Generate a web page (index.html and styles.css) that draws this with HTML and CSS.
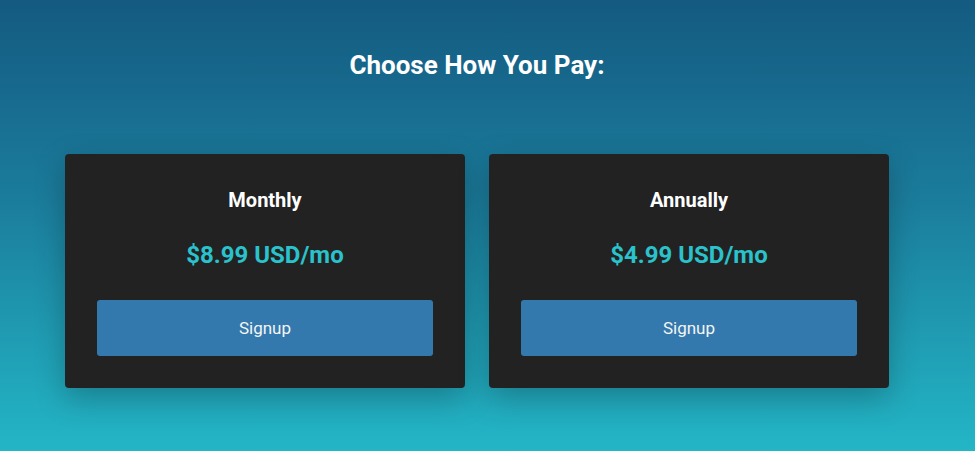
FILE: index.html
```html
<!DOCTYPE html>
<html lang="en">
<head>
    <meta charset="UTF-8">
    <meta name="viewport" content="width=device-width, initial-scale=1.0">
    <title>Choose How You Pay</title>
    <link rel="stylesheet" href="styles.css">
</head>
<body>

<div class="page">
    <h1 class="heading">Choose How You Pay:</h1>

    <div class="plans">
        <div class="plan">
            <h3 class="plan-name">Monthly</h3>
            <div class="plan-price">$8.99 USD/mo</div>
            <button type="button" class="button">Signup</button>
        </div>
        <div class="plan">
            <h3 class="plan-name">Annually</h3>
            <div class="plan-price">$4.99 USD/mo</div>
            <button type="button" class="button">Signup</button>
        </div>
    </div>
</div>

</body>
</html>
```

FILE: styles.css
```css
html, body {
    height: 100%;
}
body {
    font-family: Roboto, "Liberation Sans", Arial, sans-serif;
    margin: 0;
    padding: 0;
    background: linear-gradient(to bottom, #145a81 0%, #1b7d9c 45%, #23b6c6 100%);
    color: #fff;
}
.page {
    width: 954px;
    padding-top: 50px;
}
.heading {
    margin: 0;
    font-size: 26px;
    font-weight: 700;
    text-align: center;
}
.plans {
    display: flex;
    justify-content: center;
    gap: 24px;
    margin-top: 74px;
}
.plan {
    width: 400px;
    box-sizing: border-box;
    padding: 34px 32px 32px;
    background-color: #222;
    border-radius: 4px;
    box-shadow: 0 10px 30px rgba(0, 0, 0, 0.25);
    text-align: center;
}
.plan-name {
    margin: 0;
    font-size: 20px;
    font-weight: 700;
}
.plan-price {
    margin: 29px 0 31px;
    font-size: 24px;
    font-weight: 700;
    color: #2ac2cc;
}
.button {
    display: block;
    width: 100%;
    height: 56px;
    background-color: #3379ad;
    color: #f4f4f4;
    font-family: inherit;
    font-size: 17px;
    font-weight: 400;
    border: none;
    border-radius: 3px;
    cursor: pointer;
}
```
